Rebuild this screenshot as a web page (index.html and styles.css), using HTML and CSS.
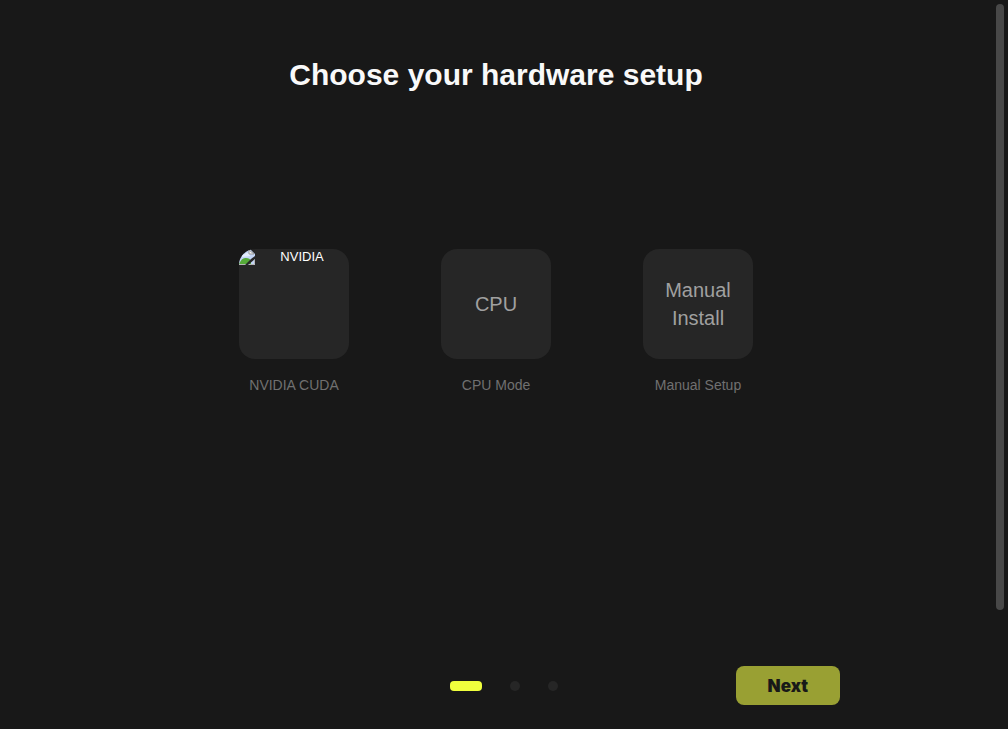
FILE: index.html
```html
<!DOCTYPE html>
<html lang="en">
<head>
<meta charset="utf-8">
<meta name="viewport" content="width=device-width, initial-scale=1">
<title>Hardware setup</title>
<link rel="stylesheet" href="styles.css">
</head>
<body>
<div class="view">
  <main class="content">
    <h1 class="title">Choose your hardware setup</h1>
    <div class="options">
      <div class="option">
        <button class="tile tile-logo" type="button" aria-labelledby="label-nvidia">
          <svg class="broken" viewBox="0 0 16 16" aria-hidden="true">
            <path d="M0 0h11l5 5v11H0z" fill="#c3d5f5"/>
            <path d="M3 8q0-3 3-3 1-2 3-1 2 0 2 3z" fill="#e4edfc"/>
            <path d="M0 15q3-7 7-6 4 0 5 3v3z" fill="#55aa38"/>
            <path d="M10 1v4h5z" fill="#f4f4f4" stroke="#999" stroke-width="1"/>
            <path d="M16 7v3l-7 6H6l6-6z" fill="#262626"/>
            <path d="M0 15.500h6M10 15.500h5.500V11" fill="none" stroke="#b5b5b5"/>
          </svg>
          <span class="alt">NVIDIA</span>
        </button>
        <span class="label" id="label-nvidia">NVIDIA CUDA</span>
      </div>
      <div class="option">
        <button class="tile" type="button">CPU</button>
        <span class="label">CPU Mode</span>
      </div>
      <div class="option">
        <button class="tile" type="button">Manual Install</button>
        <span class="label">Manual Setup</span>
      </div>
    </div>
  </main>
  <div class="scrollbar"><div class="thumb"></div></div>
  <footer class="footer">
    <div class="steps">
      <span class="step step-active"></span>
      <span class="step"></span>
      <span class="step"></span>
    </div>
    <button class="next" type="button">Next</button>
  </footer>
</div>
</body>
</html>
```
FILE: styles.css
```css
* { box-sizing: border-box; }
body {
  margin: 0;
  background: #181818;
  color: #fff;
  font-family: "Liberation Sans", Arial, sans-serif;
}
.view {
  display: grid;
  grid-template-columns: 1fr 16px;
  grid-template-rows: 1fr auto;
  min-height: 100vh;
}
.content {
  display: flex;
  flex-direction: column;
  align-items: center;
  padding-top: 57px;
}
.title {
  margin: 0;
  font-size: 30px;
  line-height: 36px;
  color: #f9f9f9;
}
.options {
  display: flex;
  gap: 92px;
  margin-top: 156px;
}
.option {
  display: flex;
  flex-direction: column;
  align-items: center;
  gap: 16px;
  width: 110px;
}
.tile {
  width: 110px;
  height: 110px;
  padding: 0 16px;
  border: 0;
  border-radius: 16px;
  background: #262626;
  color: #a0a0a0;
  font-family: inherit;
  font-size: 20px;
  line-height: 28px;
  overflow: hidden;
}
.tile-logo {
  display: flex;
  align-items: flex-start;
  padding: 0;
  color: #fff;
  font-size: 13px;
  line-height: 15px;
}
.broken {
  width: 16px;
  height: 16px;
  flex: none;
}
.alt {
  flex: 1;
}
.label {
  color: #707070;
  font-size: 14px;
  line-height: 20px;
}
.scrollbar {
  grid-row: 1 / 3;
  grid-column: 2;
  padding: 4px;
}
.thumb {
  height: 84%;
  border-radius: 4px;
  background: #484848;
}
.footer {
  grid-row: 2;
  grid-column: 1 / 3;
  display: grid;
  grid-template-columns: 1fr auto 1fr;
  align-items: center;
  padding: 0 calc(100% / 6) 24px;
}
.steps {
  grid-column: 2;
  display: flex;
  gap: 28px;
}
.step {
  width: 10px;
  height: 10px;
  border-radius: 5px;
  background: #262626;
}
.step-active {
  width: 32px;
  border-radius: 4px;
  background: #f0ff3d;
}
.next {
  justify-self: end;
  padding: 9px 32px 7px;
  border: 0;
  border-radius: 8px;
  background: #99a033;
  color: #181818;
  font-family: "Arial Black", Inter, sans-serif;
  font-size: 17px;
  font-weight: 900;
  line-height: 23px;
}
```
